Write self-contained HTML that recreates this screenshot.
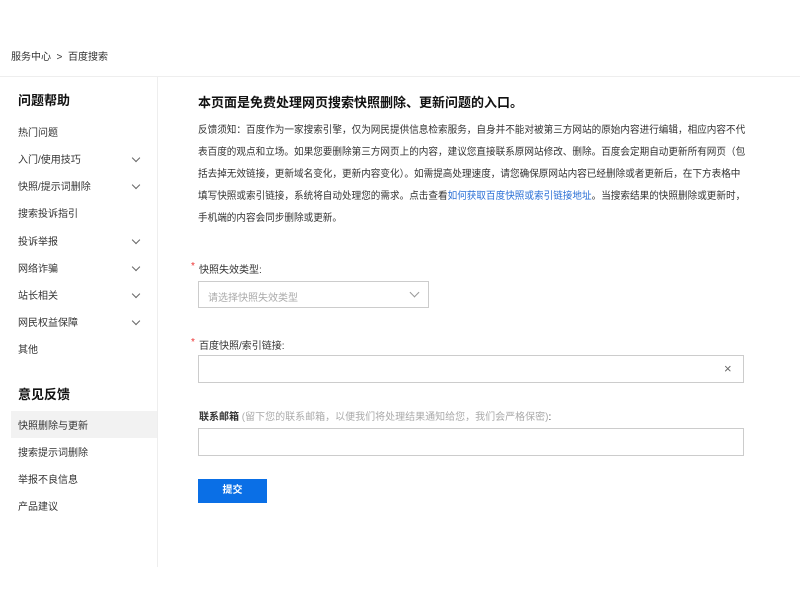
<!DOCTYPE html>
<html><head><meta charset="utf-8"><style>
*{margin:0;padding:0;box-sizing:border-box}
body{width:800px;height:600px;background:#fff;font-family:"Liberation Sans","Noto Sans CJK SC",sans-serif;color:#333;position:relative;overflow:hidden}
.a{position:absolute;white-space:nowrap}
.bc{left:11px;top:48px;font-size:10px;color:#333}
.hl{position:absolute;left:0;top:76px;width:800px;height:1px;background:#eee}
.side{position:absolute;left:157px;top:77px;width:1px;height:490px;background:#eee}
.h{font-size:13px;font-weight:bold;color:#111}
.it{font-size:10px;color:#333;left:18px}
.ch{position:absolute;left:133px;width:6px;height:6px;border-right:1px solid #666;border-bottom:1px solid #666;transform:rotate(45deg)}
.sel{position:absolute;left:11px;top:411px;width:146px;height:27px;background:#f2f2f2}
p.t{position:absolute;left:198px;top:120px;width:600px;font-size:10px;line-height:22px;color:#333;white-space:nowrap;transform:scaleX(0.96);transform-origin:0 0}
.lb{font-size:10px;color:#333}
.st{color:#e33;font-size:10px}
.box{position:absolute;border:1px solid #ccc;background:#fff}
.btn{position:absolute;left:198px;top:479px;width:69px;height:24px;background:#0a6fe6;color:#fff;font-size:10px;font-weight:bold;text-align:center;line-height:24px}
</style></head><body>
<div class="a bc">服务中心 &nbsp;&gt;&nbsp; 百度搜索</div>
<div class="hl"></div><div class="side"></div>
<div class="a h" style="left:18px;top:90px">问题帮助</div>
<div class="a it" style="top:124px">热门问题</div>
<div class="a it" style="top:151px">入门/使用技巧</div><div class="ch" style="top:155px"></div>
<div class="a it" style="top:178px">快照/提示词删除</div><div class="ch" style="top:182px"></div>
<div class="a it" style="top:205px">搜索投诉指引</div>
<div class="a it" style="top:233px">投诉举报</div><div class="ch" style="top:237px"></div>
<div class="a it" style="top:260px">网络诈骗</div><div class="ch" style="top:264px"></div>
<div class="a it" style="top:287px">站长相关</div><div class="ch" style="top:291px"></div>
<div class="a it" style="top:314px">网民权益保障</div><div class="ch" style="top:318px"></div>
<div class="a it" style="top:341px">其他</div>
<div class="a h" style="left:18px;top:384px">意见反馈</div>
<div class="sel"></div>
<div class="a it" style="top:417px">快照删除与更新</div>
<div class="a it" style="top:444px">搜索提示词删除</div>
<div class="a it" style="top:471px">举报不良信息</div>
<div class="a it" style="top:498px">产品建议</div>
<div class="a h" style="left:198px;top:92px">本页面是免费处理网页搜索快照删除、更新问题的入口。</div>
<p class="t">反馈须知：百度作为一家搜索引擎，仅为网民提供信息检索服务，自身并不能对被第三方网站的原始内容进行编辑，相应内容不代<br>表百度的观点和立场。如果您要删除第三方网页上的内容，建议您直接联系原网站修改、删除。百度会定期自动更新所有网页（包<br>括去掉无效链接，更新域名变化，更新内容变化）。如需提高处理速度，请您确保原网站内容已经删除或者更新后，在下方表格中<br>填写快照或索引链接，系统将自动处理您的需求。点击查看<span style="color:#2a6fd6">如何获取百度快照或索引链接地址</span>。当搜索结果的快照删除或更新时，<br>手机端的内容会同步删除或更新。</p>
<div class="a st" style="left:191px;top:261px">*</div><div class="a lb" style="left:199px;top:261px">快照失效类型:</div>
<div class="box" style="left:198px;top:281px;width:231px;height:27px"><span class="a" style="left:9px;top:7px;font-size:10px;color:#aaa">请选择快照失效类型</span><div style="position:absolute;left:212px;top:7px;width:7px;height:7px;border-right:1px solid #999;border-bottom:1px solid #999;transform:rotate(45deg)"></div></div>
<div class="a st" style="left:191px;top:337px">*</div><div class="a lb" style="left:199px;top:337px">百度快照/索引链接:</div>
<div class="box" style="left:198px;top:355px;width:546px;height:28px"><span class="a" style="left:525px;top:5px;font-size:13px;color:#666">×</span></div>
<div class="a lb" style="left:199px;top:408px"><b>联系邮箱</b> <span style="color:#aaa">(留下您的联系邮箱，以便我们将处理结果通知给您，我们会严格保密)</span>:</div>
<div class="box" style="left:198px;top:428px;width:546px;height:28px"></div>
<div class="btn">提交</div>
</body></html>
